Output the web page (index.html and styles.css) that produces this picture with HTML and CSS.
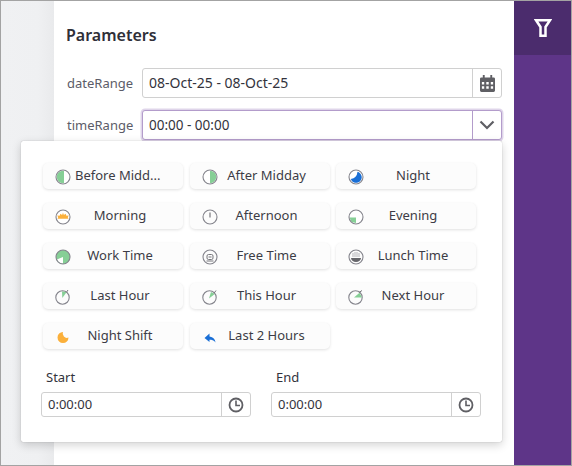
FILE: index.html
```html
<!DOCTYPE html>
<html lang="en">
<head>
<meta charset="utf-8">
<title>Parameters</title>
<link rel="stylesheet" href="styles.css">
</head>
<body>
<div class="window">
  <div class="gutter"></div>
  <main class="panel">
    <h1 class="title">Parameters</h1>
    <div class="row">
      <label class="row-label">dateRange</label>
      <div class="input">
        <span class="value value-date">08-Oct-25 - 08-Oct-25</span>
        <span class="addon">
          <svg width="15" height="17" viewBox="0 0 16 18"><path fill="#5f5f64" fill-rule="evenodd" d="M3 0h2v2.500h6V0h2v2.500h1.500A1.500 1.500 0 0 1 16 4V16.500A1.500 1.500 0 0 1 14.500 18h-13A1.500 1.500 0 0 1 0 16.500V4A1.500 1.500 0 0 1 1.500 2.500H3zM2 7.500v2.500h2.500V7.500zm4.700 0v2.500h2.600V7.500zm4.800 0v2.500H14V7.500zM2 12v2.500h2.500V12zm4.700 0v2.500h2.600V12zm4.800 0v2.500H14V12z"/></svg>
        </span>
      </div>
    </div>
    <div class="row">
      <label class="row-label">timeRange</label>
      <div class="input input-focus">
        <span class="value value-time">00:00 - 00:00</span>
        <span class="addon">
          <svg width="16" height="10" viewBox="0 0 16 10"><path fill="none" stroke="#5f5f64" stroke-width="2.200" d="M1.500 1.500 8 8l6.500-6.500"/></svg>
        </span>
      </div>
    </div>
  </main>
  <aside class="rail">
    <div class="rail-top">
      <svg width="18" height="18" viewBox="0 0 18 18"><path fill="none" stroke="#fff" stroke-width="2.500" d="M2 1.300h14L11.500 8V16.700h-5V8z"/></svg>
    </div>
  </aside>

  <section class="popup">
    <div class="presets">
      <button class="preset"><svg class="ico" viewBox="0 0 16 16"><circle cx="8" cy="8" r="7" fill="#fff"/><path fill="#86cf96" d="M9 2v12a6 6 0 0 1-1 .200 6.200 6.200 0 0 1 0-12.400 6 6 0 0 1 1 .200z"/><circle class="ring" cx="8" cy="8" r="7"/></svg><span class="txt txt-clipped">Before Midd...</span></button>
      <button class="preset"><svg class="ico" viewBox="0 0 16 16"><circle cx="8" cy="8" r="7" fill="#fff"/><path fill="#86cf96" d="M8 1.800a6.200 6.200 0 0 1 0 12.400z"/><circle class="ring" cx="8" cy="8" r="7"/></svg><span class="txt">After Midday</span></button>
      <button class="preset"><svg class="ico" viewBox="0 0 16 16"><circle cx="8" cy="8" r="7" fill="#fff"/><path fill="#1a6fd6" d="M9.500 2.800A5.600 5.600 0 1 1 2.800 10 8 8 0 0 0 9.500 2.800z"/><circle class="ring" cx="8" cy="8" r="7"/></svg><span class="txt">Night</span></button>

      <button class="preset"><svg class="ico" viewBox="0 0 16 16"><circle cx="8" cy="8" r="7" fill="#fff"/><path fill="#fbb03b" d="M2.500 9.800h11L12.800 8.200l1-1.700-2.400.2-.8-2-1.700 1.200L8 3.800 7.100 5.900 5.400 4.700l-.8 2-2.400-.2 1 1.700z"/><circle class="ring" cx="8" cy="8" r="7"/></svg><span class="txt">Morning</span></button>
      <button class="preset"><svg class="ico" viewBox="0 0 16 16"><circle class="ring" cx="8" cy="8" r="7"/><path stroke="#77777c" stroke-width="1.200" d="M8 3.500v5"/></svg><span class="txt">Afternoon</span></button>
      <button class="preset"><svg class="ico" viewBox="0 0 16 16"><circle cx="8" cy="8" r="7" fill="#fff"/><path fill="#86cf96" d="M1.500 8.500H8V14L3.500 13z"/><circle class="ring" cx="8" cy="8" r="7"/></svg><span class="txt">Evening</span></button>

      <button class="preset"><svg class="ico" viewBox="0 0 16 16"><circle cx="8" cy="8" r="7" fill="#86cf96"/><path fill="#fff" d="M8 8v6.500A6.500 6.500 0 0 1 1.800 10.500z"/><circle class="ring" cx="8" cy="8" r="7"/></svg><span class="txt">Work Time</span></button>
      <button class="preset"><svg class="ico" viewBox="0 0 16 16"><circle class="ring" cx="8" cy="8" r="7"/><rect x="5" y="5.500" width="6" height="5" rx="1.500" fill="none" stroke="#77777c"/><path stroke="#77777c" d="M6.500 8h3M4.500 12h7"/></svg><span class="txt">Free Time</span></button>
      <button class="preset"><svg class="ico" viewBox="0 0 16 16"><circle class="ring" cx="8" cy="8" r="7"/><path fill="#66666b" d="M3 9h10a5 4 0 0 1-10 0z"/><path stroke="#b5b5ba" fill="none" d="M5 8V4M7 8V3M9 8V3M11 8V4"/></svg><span class="txt">Lunch Time</span></button>

      <button class="preset"><svg class="ico" viewBox="0 0 16 16"><circle class="ring" cx="7.500" cy="8.500" r="6.700"/><path fill="#86cf96" d="M7 2.300 11.500 3.200 7.300 9z"/><path stroke="#77777c" d="M11.500 3.200 13 1"/></svg><span class="txt">Last Hour</span></button>
      <button class="preset"><svg class="ico" viewBox="0 0 16 16"><circle class="ring" cx="7.500" cy="8.500" r="6.700"/><path fill="#86cf96" d="M7 9.500 9 3 12.800 5z"/><path stroke="#77777c" d="M12 4.300 14 1.500"/></svg><span class="txt">This Hour</span></button>
      <button class="preset"><svg class="ico" viewBox="0 0 16 16"><circle class="ring" cx="7.500" cy="8.500" r="6.700"/><path fill="#86cf96" d="M6 8.500 11.500 3.800 14 8.500z"/><path stroke="#77777c" d="M11 3.500 14 1.500"/></svg><span class="txt">Next Hour</span></button>

      <button class="preset"><svg class="ico" viewBox="0 0 16 16"><path fill="#fbb03b" d="M8 3A5.500 5.500 0 1 0 13.500 8.500 4.200 4.200 0 0 1 8 3z"/></svg><span class="txt">Night Shift</span></button>
      <button class="preset"><svg class="ico" viewBox="0 0 16 16"><path fill="#1a6fd6" d="M7.500 4.500 2.500 9 7.500 13V10.700c2.200 0 4.300.4 6 2.800-.3-3.300-2.300-5.600-6-6z"/></svg><span class="txt">Last 2 Hours</span></button>
    </div>
    <div class="times">
      <div class="time-field">
        <label class="time-label">Start</label>
        <div class="input input-sm">
          <span class="value">0:00:00</span>
          <span class="addon addon-sm"><svg width="16" height="16" viewBox="0 0 16 16"><circle cx="8" cy="8" r="6.500" fill="none" stroke="#5f5f64" stroke-width="1.800"/><path fill="none" stroke="#5f5f64" stroke-width="1.600" d="M8 3.500V8.500H12"/></svg></span>
        </div>
      </div>
      <div class="time-field">
        <label class="time-label">End</label>
        <div class="input input-sm">
          <span class="value">0:00:00</span>
          <span class="addon addon-sm"><svg width="16" height="16" viewBox="0 0 16 16"><circle cx="8" cy="8" r="6.500" fill="none" stroke="#5f5f64" stroke-width="1.800"/><path fill="none" stroke="#5f5f64" stroke-width="1.600" d="M8 3.500V8.500H12"/></svg></span>
        </div>
      </div>
    </div>
  </section>
</div>
</body>
</html>
```
FILE: styles.css
```css
* { box-sizing: border-box; }
html, body { margin: 0; padding: 0; background: #fff; }
body { font-family: "Noto Sans", "Open Sans", sans-serif; font-size: 13px; color: #3c3c46; }

.window {
  position: relative;
  display: flex;
  width: 572px;
  height: 466px;
  border: 1px solid #a3a3a3;
  overflow: hidden;
}
.gutter {
  width: 53px;
  flex: none;
  background: linear-gradient(to right, #f0f1f3 0, #eff0f2 70%, #e9eaec 100%);
}
.panel {
  flex: 1;
  padding: 22px 12px 0 12px;
  background: #fff;
}
.title {
  margin: 0 0 21px;
  font-size: 16px;
  line-height: 24px;
  font-weight: 600;
  color: #2f2f38;
}
.row {
  display: flex;
  align-items: center;
  height: 30px;
  margin-bottom: 12px;
}
.row-label {
  width: 76px;
  flex: none;
  padding-left: 1px;
  color: #5c5c68;
  font-size: 13px;
}
.input {
  flex: 1;
  display: flex;
  align-items: stretch;
  height: 30px;
  background: #fff;
  border: 1px solid #d0d0d0;
  border-radius: 3px;
}
.input-focus {
  border-color: #b39ccb;
  box-shadow: 0 0 0 1.500px #dfd5ea;
}
.input-focus .addon { border-left-color: #b39ccb; }
.value {
  flex: 1;
  padding-left: 6px;
  line-height: 28px;
  font-size: 13px;
  color: #33333c;
}
.value-date { font-size: 14px; }
.value-time { font-size: 13.500px; }
.addon {
  width: 29px;
  flex: none;
  display: flex;
  align-items: center;
  justify-content: center;
  border-left: 1px solid #d0d0d0;
}
.rail {
  width: 57px;
  flex: none;
  background: #5e3588;
}
.rail-top {
  height: 54px;
  display: flex;
  align-items: center;
  justify-content: center;
  background: #4b2c6d;
}

.popup {
  position: absolute;
  left: 20px;
  top: 140px;
  width: 481px;
  height: 301px;
  padding: 22px 20px 0 20px;
  background: #fff;
  border-radius: 2px;
  box-shadow: 0 0 1px rgba(0,0,0,.35), 0 3px 10px rgba(0,0,0,.18);
}
.presets {
  display: grid;
  grid-template-columns: repeat(3, 140px);
  column-gap: 6.500px;
  row-gap: 14px;
  margin-left: 2px;
}
.preset {
  display: flex;
  align-items: center;
  height: 26px;
  padding: 0 18px 0 12px;
  border: 0;
  border-radius: 5px;
  background: #fcfcfc;
  box-shadow: 0 1px 3px rgba(0,0,0,.12);
  font: inherit;
  color: #3c3c46;
}
.ico { width: 16px; height: 16px; flex: none; margin-top: 2px; }
.ring { fill: none; stroke: #84848c; stroke-width: 1.100; }
.txt {
  flex: 1;
  text-align: center;
  white-space: nowrap;
  margin-left: 4px;
  margin-top: -2px;
}
.txt-clipped { text-align: left; }
.times {
  display: flex;
  gap: 20px;
  margin-top: 18px;
}
.time-field { width: 210px; }
.time-label {
  display: block;
  height: 25px;
  line-height: 20px;
  padding-left: 5px;
  color: #33333c;
}
.input-sm { flex: none; height: 25px; }
.input-sm .value { line-height: 23px; padding-left: 6px; }
.addon-sm { width: 29px; }
```
